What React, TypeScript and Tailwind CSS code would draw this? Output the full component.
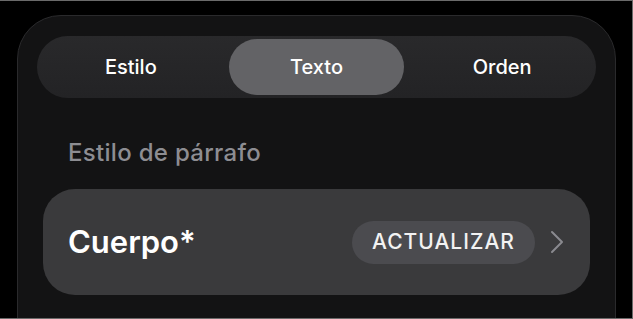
import { useState } from 'react'

const TABS = ['Estilo', 'Texto', 'Orden']

function Chevron() {
  return (
    <svg width="14" height="24" viewBox="0 0 14 24" fill="none" aria-hidden="true">
      <polyline points="2,2 12,12 2,22" stroke="#8a8a8f" strokeWidth="2" strokeLinecap="round" strokeLinejoin="round" />
    </svg>
  )
}

export default function App() {
  const [tab, setTab] = useState('Texto')

  return (
    <div className="w-[633px] h-[319px] overflow-hidden bg-black border-t border-r border-b border-[#6a6a6a] pt-[14px] pl-[17px] pr-[16px] font-['Inter','Liberation_Sans',sans-serif]">
      <div className="h-[420px] rounded-t-[44px] border border-[#2a2a2c] bg-[#131314] px-[19px] pt-[20px]">
        <div className="grid h-[62px] grid-cols-3 gap-[4px] rounded-full bg-gradient-to-b from-[#29292b] to-[#232325] p-[3px]">
          {TABS.map(t => (
            <button
              key={t}
              type="button"
              onClick={() => setTab(t)}
              className={
                'rounded-full text-[20px] font-medium text-white ' +
                (t === tab ? 'mx-[3px] bg-[#636366]' : 'bg-transparent')
              }
            >
              {t}
            </button>
          ))}
        </div>

        <p className="pl-[31px] pt-[40px] pb-[21px] text-[24px] leading-[30px] font-medium tracking-[0.3px] text-[#8d8d92]">
          Estilo de párrafo
        </p>

        <div className="mx-[6px] flex h-[106px] items-center rounded-[32px] bg-[#3a3a3c] pl-[25px] pr-[26px]">
          <span className="flex-1 text-[31px] font-semibold text-white">Cuerpo*</span>
          <span className="flex h-[43px] w-[183px] items-center justify-center rounded-full bg-[#4b4b4f] text-[21px] font-medium tracking-[1px] text-[#f2f2f2]">
            ACTUALIZAR
          </span>
          <span className="ml-[15px] flex items-center">
            <Chevron />
          </span>
        </div>
      </div>
    </div>
  )
}
